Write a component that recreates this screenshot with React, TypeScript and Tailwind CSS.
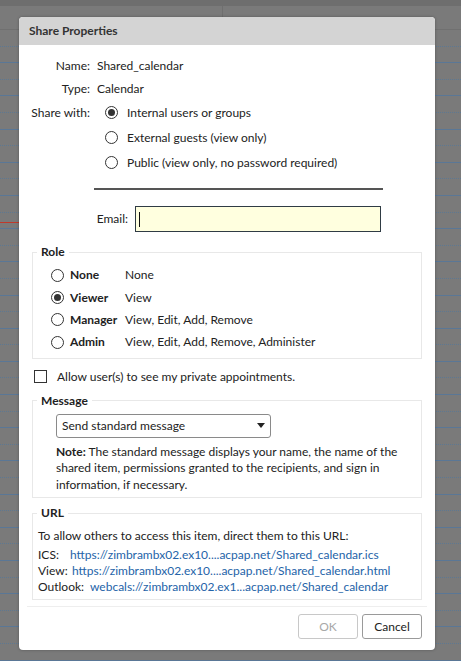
import React from "react";

const font = { fontFamily: 'Lato, "Noto Sans", sans-serif' };

function Radio({ checked }: { checked?: boolean }) {
  return (
    <span className="inline-flex h-[13px] w-[13px] shrink-0 items-center justify-center rounded-full border border-[#333] bg-white">
      {checked && <span className="h-[7px] w-[7px] rounded-full bg-[#333]" />}
    </span>
  );
}

function Background() {
  const rows = Array.from({ length: 38 });
  return (
    <div className="absolute inset-0 flex flex-col bg-[#7a7a7a]">
      <div className="h-[6px] bg-[#6e6e6e]" />
      <div className="flex h-[24px] border-b border-[#707070]">
        <div className="w-[223px] border-r border-[#6f6f6f]" />
        <div className="flex-1" />
      </div>
      <div className="relative flex flex-col">
        {rows.map((_, i) => (
          <div
            key={i}
            className={
              i % 2 === 0
                ? "h-[16.6px] border-b border-dotted border-[#5d7892]"
                : "h-[16.6px] border-b border-[#5a7796]"
            }
          />
        ))}
        <div className="absolute left-0 top-[192px] h-px w-[19px] bg-[#c0392b]" />
      </div>
    </div>
  );
}

const roles: [string, string, boolean][] = [
  ["None", "None", false],
  ["Viewer", "View", true],
  ["Manager", "View, Edit, Add, Remove", false],
  ["Admin", "View, Edit, Add, Remove, Administer", false],
];

export default function App() {
  return (
    <div className="relative h-[661px] w-[461px] overflow-hidden text-[12px] text-[#222]" style={font}>
      <Background />
      <div className="absolute left-[19px] top-[17px] flex h-[633px] w-[416px] flex-col overflow-hidden rounded-[4px] bg-white shadow-[0_0_3px_rgba(0,0,0,0.3)]">
        <div className="flex h-[28px] shrink-0 items-center bg-[#d4d4d4] pl-[10px] font-bold text-[#333]">
          Share Properties
        </div>
        <div className="flex shrink-0 flex-col px-[13px] pt-[10px]">
          <div className="grid grid-cols-[58px_1fr] gap-x-[7px]">
            <div className="flex h-[22px] items-center justify-end">Name:</div>
            <div className="flex h-[22px] items-center">Shared_calendar</div>
            <div className="flex h-[23px] items-center justify-end">Type:</div>
            <div className="flex h-[23px] items-center">Calendar</div>
            <div className="flex h-[25px] items-center justify-end whitespace-nowrap">Share with:</div>
            <div className="flex flex-col pl-[8px]">
              <label className="flex h-[25px] items-center gap-[9px]">
                <Radio checked /> Internal users or groups
              </label>
              <label className="flex h-[25px] items-center gap-[9px]">
                <Radio /> External guests (view only)
              </label>
              <label className="flex h-[25px] items-center gap-[9px]">
                <Radio /> Public (view only, no password required)
              </label>
            </div>
          </div>
          <div className="ml-[62px] mt-[13px] h-[2px] w-[289px] bg-[#555]" />
          <div className="mt-[16px] flex items-center">
            <div className="w-[96px] text-right">Email:</div>
            <div className="ml-[7px] flex h-[26px] w-[246px] items-center border border-[#2f3b44] bg-[#ffffdf] pl-[3px]">
              <span className="h-[15px] w-px bg-[#111]" />
            </div>
          </div>

          <fieldset className="mt-[12px] border border-[#e8e8e8] px-0 pb-[4px] pt-0">
            <legend className="ml-[4px] px-[4px] font-bold leading-[16px]">Role</legend>
            <div className="flex flex-col pl-[18px] pt-[4px]">
              {roles.map(([a, b, c]) => (
                <div key={a} className="flex h-[22.4px] items-center">
                  <Radio checked={c} />
                  <span className="ml-[6px] w-[55px] font-bold">{a}</span>
                  <span>{b}</span>
                </div>
              ))}
            </div>
          </fieldset>

          <label className="mt-[10px] flex h-[16px] items-center pl-[2px]">
            <span className="h-[13px] w-[13px] border border-[#333] bg-white" />
            <span className="ml-[10px]">Allow user(s) to see my private appointments.</span>
          </label>

          <fieldset className="mt-[8px] border border-[#e8e8e8] pb-[4px] pl-[23px] pr-0 pt-0">
            <legend className="-ml-[19px] px-[4px] font-bold leading-[16px]">Message</legend>
            <div className="mt-[5px] flex h-[24px] w-[215px] items-center justify-between rounded-[3px] border border-[#8a8a8a] bg-white pl-[5px] pr-[5px]">
              <span>Send standard message</span>
              <span className="h-0 w-0 border-x-[4px] border-t-[5px] border-x-transparent border-t-[#222]" />
            </div>
            <p className="mt-[6px] whitespace-nowrap leading-[16.5px]">
              <span className="font-bold">Note:</span> The standard message displays your name, the name of the
              <br />
              shared item, permissions granted to the recipients, and sign in
              <br />
              information, if necessary.
            </p>
          </fieldset>

          <fieldset className="mt-[7px] border border-[#e8e8e8] pb-[4px] pl-[5px] pr-0 pt-0">
            <legend className="-ml-[1px] px-[4px] font-bold leading-[16px]">URL</legend>
            <div className="mt-[7px] h-[16px] whitespace-nowrap leading-[16px]">
              To allow others to access this item, direct them to this URL:
            </div>
            <div className="mt-[3px] flex flex-col whitespace-nowrap leading-[16px]">
              <div className="flex">
                <span className="w-[32px]">ICS:</span>
                <span className="text-[#2463a8]">https://zimbrambx02.ex10....acpap.net/Shared_calendar.ics</span>
              </div>
              <div className="flex">
                <span className="w-[34px]">View:</span>
                <span className="text-[#2463a8]">https://zimbrambx02.ex10....acpap.net/Shared_calendar.html</span>
              </div>
              <div className="flex">
                <span className="w-[52px]">Outlook:</span>
                <span className="text-[#2463a8]">webcals://zimbrambx02.ex1...acpap.net/Shared_calendar</span>
              </div>
            </div>
          </fieldset>
        </div>
        <div className="mx-[8px] mt-[6px] h-px shrink-0 bg-[#eeeeee]" />
        <div className="flex shrink-0 justify-end gap-[4px] pr-[13px] pt-[7px]">
          <button className="h-[25px] w-[60px] rounded-[3px] border border-[#c8c8c8] bg-white text-[#a8a8a8]">OK</button>
          <button className="h-[25px] w-[60px] rounded-[3px] border border-[#9a9a9a] bg-white text-[#222]">Cancel</button>
        </div>
      </div>
    </div>
  );
}
